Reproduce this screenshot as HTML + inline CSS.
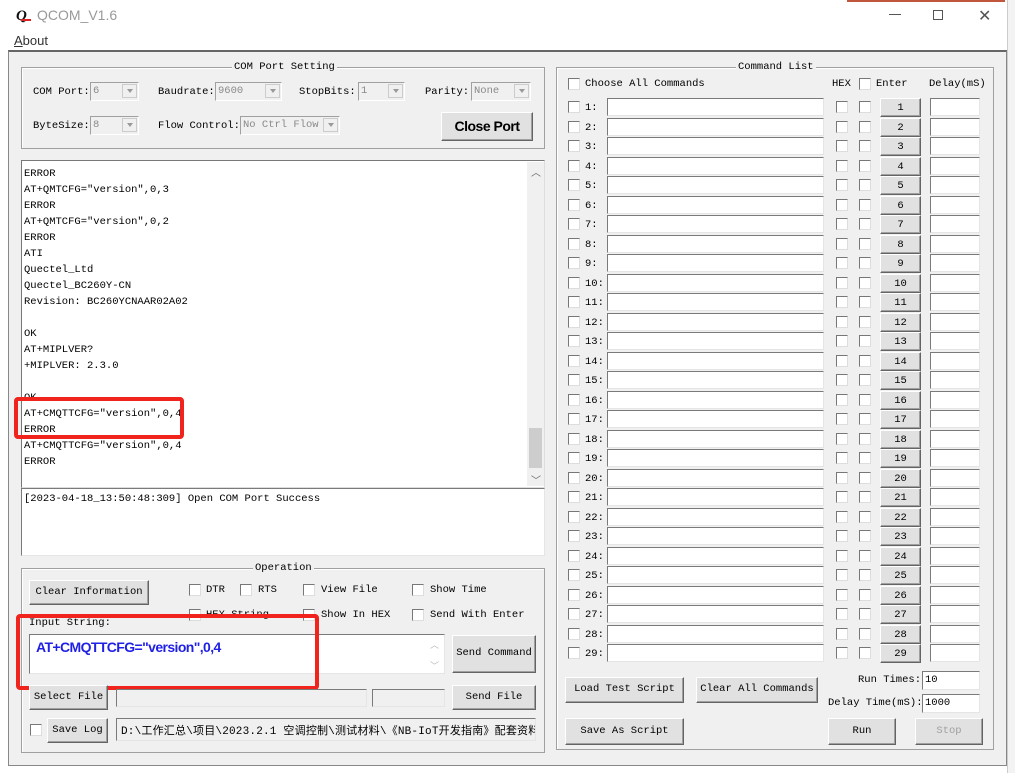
<!DOCTYPE html>
<html><head><meta charset="utf-8"><style>
*{box-sizing:border-box;margin:0;padding:0}
body{width:1015px;height:773px;background:#fff;position:relative;overflow:hidden;font-family:"Liberation Mono","Noto Sans CJK SC",monospace;font-size:10.5px;color:#000}
.a{position:absolute}
.grp{position:absolute;border:1px solid #a0a0a0;box-shadow:inset 1px 1px 0 #fff}
.gt{position:absolute;background:#f0f0f0;padding:0 2px;top:-7px;line-height:12px}
.cb{position:absolute;width:12px;height:12px;background:#fff;border:1px solid #777;border-right-color:#ddd;border-bottom-color:#ddd}
.btn{position:absolute;background:#e1e1e1;border:1px solid;border-color:#fff #646464 #646464 #fff;box-shadow:inset -1px -1px 0 #a0a0a0;text-align:center}
.ed{position:absolute;background:#fff;border:1px solid;border-color:#7a7a7a #e5e5e5 #e5e5e5 #7a7a7a}
.cmb{position:absolute;background:#f0f0f0;border:1px solid;border-color:#a0a0a0 #fff #fff #a0a0a0;color:#8a8a8a;padding-left:2px;line-height:16px}
.cmb i{position:absolute;right:1px;top:1px;width:15px;height:14px;border:1px solid #ccc;background:#f0f0f0}
.cmb i:after{content:"";position:absolute;left:4px;top:4px;border:3px solid transparent;border-top:4px solid #999}
.r{position:absolute;left:0;width:1015px;height:20px}
.r .cb{top:3px}
.r .l{position:absolute;left:585px;top:3px;line-height:14px}
.r .e1{left:607px;width:217px;height:18px;top:0}
.r .h{left:836px}.r .n{left:859px}.r .c0{left:568px}
.r .b{left:880px;width:41px;height:19px;top:0;line-height:18px}
.r .e2{left:930px;width:50px;height:18px;top:0}
.t{line-height:16px;white-space:pre}
</style></head><body>
<div class="a" style="left:0;top:0;width:1007px;height:52px;background:#fff"></div>
<div class="a" style="left:847px;top:0;width:158px;height:2px;background:#c0563c"></div>
<div class="a" style="left:1007px;top:0;width:8px;height:773px;background:#f3f3f3;border-left:1px solid #ccc"></div>
<div class="a" style="left:16px;top:8px;font:italic bold 15px 'Liberation Serif',serif;color:#111">Q</div>
<div class="a" style="left:21px;top:19px;width:10px;height:2px;background:#d22"></div>
<div class="a" style="left:37px;top:7px;font:14px 'Liberation Sans',sans-serif;color:#999">QCOM_V1.6</div>
<div class="a" style="left:889px;top:14px;width:12px;height:1px;background:#555"></div>
<div class="a" style="left:933px;top:10px;width:10px;height:10px;border:1px solid #555"></div>
<div class="a" style="left:978px;top:6px;font:16px 'Liberation Sans',sans-serif;color:#555">✕</div>
<div class="a" style="left:14px;top:33px;font:13px 'Liberation Sans',sans-serif;color:#333"><u>A</u>bout</div>
<div class="a" style="left:8px;top:50px;width:999px;height:716px;background:#f0f0f0;border:1px solid #888;border-top:2px solid #666"></div>

<div class="grp" style="left:21px;top:67px;width:524px;height:82px"><div class="gt" style="left:210px">COM Port Setting</div></div>
<div class="a" style="left:33px;top:86px">COM Port:</div>
<div class="cmb" style="left:90px;top:82px;width:49px;height:19px">6<i></i></div>
<div class="a" style="left:158px;top:86px">Baudrate:</div>
<div class="cmb" style="left:215px;top:82px;width:67px;height:19px">9600<i></i></div>
<div class="a" style="left:299px;top:86px">StopBits:</div>
<div class="cmb" style="left:358px;top:82px;width:47px;height:19px">1<i></i></div>
<div class="a" style="left:425px;top:86px">Parity:</div>
<div class="cmb" style="left:471px;top:82px;width:60px;height:19px">None<i></i></div>
<div class="a" style="left:33px;top:120px">ByteSize:</div>
<div class="cmb" style="left:90px;top:116px;width:49px;height:19px">8<i></i></div>
<div class="a" style="left:158px;top:120px">Flow Control:</div>
<div class="cmb" style="left:240px;top:116px;width:100px;height:19px">No Ctrl Flow<i></i></div>
<div class="btn" style="left:441px;top:112px;width:92px;height:29px;font:bold 14px 'Liberation Sans',sans-serif;line-height:26px;letter-spacing:-0.5px">Close Port</div>

<div class="ed" style="left:21px;top:160px;width:524px;height:328px;border-color:#777 #ddd #ddd #777"></div>
<div class="a" style="left:527px;top:162px;width:17px;height:324px;background:#f0f0f0"></div>
<div class="a" style="left:529px;top:428px;width:13px;height:40px;background:#cdcdcd"></div>
<div class="a" style="left:531px;top:164px;color:#666;font-size:10px">︿</div>
<div class="a" style="left:531px;top:472px;color:#666;font-size:10px">﹀</div>
<div class="a t" style="left:24px;top:166px">ERROR
AT+QMTCFG="version",0,3
ERROR
AT+QMTCFG="version",0,2
ERROR
ATI
Quectel_Ltd
Quectel_BC260Y-CN
Revision: BC260YCNAAR02A02

OK
AT+MIPLVER?
+MIPLVER: 2.3.0

OK
AT+CMQTTCFG="version",0,4
ERROR
AT+CMQTTCFG="version",0,4
ERROR</div>
<div class="a" style="left:14px;top:397px;width:170px;height:42px;border:4px solid #f0241c;border-radius:4px"></div>
<div class="ed" style="left:21px;top:488px;width:524px;height:68px"></div>
<div class="a" style="left:24px;top:493px">[2023-04-18_13:50:48:309] Open COM Port Success</div>

<div class="grp" style="left:21px;top:568px;width:524px;height:185px"><div class="gt" style="left:231px">Operation</div></div>
<div class="btn" style="left:29px;top:580px;width:120px;height:25px;line-height:22px">Clear Information</div>
<div class="cb" style="left:189px;top:584px"></div><div class="a" style="left:206px;top:584px">DTR</div>
<div class="cb" style="left:240px;top:584px"></div><div class="a" style="left:258px;top:584px">RTS</div>
<div class="cb" style="left:303px;top:584px"></div><div class="a" style="left:321px;top:584px">View File</div>
<div class="cb" style="left:412px;top:584px"></div><div class="a" style="left:430px;top:584px">Show Time</div>
<div class="cb" style="left:189px;top:609px"></div><div class="a" style="left:206px;top:609px">HEX String</div>
<div class="cb" style="left:303px;top:609px"></div><div class="a" style="left:321px;top:609px">Show In HEX</div>
<div class="cb" style="left:412px;top:609px"></div><div class="a" style="left:430px;top:609px">Send With Enter</div>
<div class="a" style="left:29px;top:617px;background:#f0f0f0;padding-right:4px">Input String:</div>
<div class="ed" style="left:29px;top:634px;width:416px;height:40px"></div>
<div class="a" style="left:36px;top:639px;font:bold 14px 'Liberation Sans',sans-serif;color:#1f1fe6;letter-spacing:-0.6px">AT+CMQTTCFG="version",0,4</div>
<div class="a" style="left:430px;top:638px;color:#bbb;font-size:9px">︿</div>
<div class="a" style="left:430px;top:659px;color:#bbb;font-size:9px">﹀</div>
<div class="btn" style="left:452px;top:635px;width:84px;height:38px;line-height:35px">Send Command</div>
<div class="a" style="left:16px;top:614px;width:303px;height:76px;border:4px solid #f0241c;border-radius:4px"></div>
<div class="btn" style="left:29px;top:685px;width:79px;height:25px;line-height:22px">Select File</div>
<div class="ed" style="left:116px;top:689px;width:251px;height:18px;background:#f0f0f0"></div>
<div class="ed" style="left:372px;top:689px;width:73px;height:18px;background:#f0f0f0"></div>
<div class="btn" style="left:452px;top:685px;width:84px;height:25px;line-height:22px">Send File</div>
<div class="cb" style="left:30px;top:724px"></div>
<div class="btn" style="left:47px;top:718px;width:61px;height:25px;line-height:22px">Save Log</div>
<div class="ed" style="left:116px;top:718px;width:420px;height:23px;background:#f0f0f0;overflow:hidden;white-space:nowrap;padding:3px 0 0 4px;font-family:'Liberation Mono','Noto Sans CJK SC',monospace;font-size:11px;letter-spacing:0.2px">D:\工作汇总\项目\2023.2.1 空调控制\测试材料\《NB-IoT开发指南》配套资料</div>

<div class="grp" style="left:556px;top:67px;width:438px;height:683px"><div class="gt" style="left:179px">Command List</div></div>
<div class="cb" style="left:568px;top:78px"></div><div class="a" style="left:585px;top:78px">Choose All Commands</div>
<div class="a" style="left:832px;top:78px">HEX</div>
<div class="cb" style="left:859px;top:78px"></div><div class="a" style="left:876px;top:78px">Enter</div>
<div class="a" style="left:929px;top:78px">Delay(mS)</div>

<div class="r" style="top:98px"><div class="cb c0"></div><div class="l">1:</div><div class="ed e1"></div><div class="cb h"></div><div class="cb n"></div><div class="btn b">1</div><div class="ed e2"></div></div>
<div class="r" style="top:117.5px"><div class="cb c0"></div><div class="l">2:</div><div class="ed e1"></div><div class="cb h"></div><div class="cb n"></div><div class="btn b">2</div><div class="ed e2"></div></div>
<div class="r" style="top:137px"><div class="cb c0"></div><div class="l">3:</div><div class="ed e1"></div><div class="cb h"></div><div class="cb n"></div><div class="btn b">3</div><div class="ed e2"></div></div>
<div class="r" style="top:156.5px"><div class="cb c0"></div><div class="l">4:</div><div class="ed e1"></div><div class="cb h"></div><div class="cb n"></div><div class="btn b">4</div><div class="ed e2"></div></div>
<div class="r" style="top:176px"><div class="cb c0"></div><div class="l">5:</div><div class="ed e1"></div><div class="cb h"></div><div class="cb n"></div><div class="btn b">5</div><div class="ed e2"></div></div>
<div class="r" style="top:195.5px"><div class="cb c0"></div><div class="l">6:</div><div class="ed e1"></div><div class="cb h"></div><div class="cb n"></div><div class="btn b">6</div><div class="ed e2"></div></div>
<div class="r" style="top:215px"><div class="cb c0"></div><div class="l">7:</div><div class="ed e1"></div><div class="cb h"></div><div class="cb n"></div><div class="btn b">7</div><div class="ed e2"></div></div>
<div class="r" style="top:234.5px"><div class="cb c0"></div><div class="l">8:</div><div class="ed e1"></div><div class="cb h"></div><div class="cb n"></div><div class="btn b">8</div><div class="ed e2"></div></div>
<div class="r" style="top:254px"><div class="cb c0"></div><div class="l">9:</div><div class="ed e1"></div><div class="cb h"></div><div class="cb n"></div><div class="btn b">9</div><div class="ed e2"></div></div>
<div class="r" style="top:273.5px"><div class="cb c0"></div><div class="l">10:</div><div class="ed e1"></div><div class="cb h"></div><div class="cb n"></div><div class="btn b">10</div><div class="ed e2"></div></div>
<div class="r" style="top:293px"><div class="cb c0"></div><div class="l">11:</div><div class="ed e1"></div><div class="cb h"></div><div class="cb n"></div><div class="btn b">11</div><div class="ed e2"></div></div>
<div class="r" style="top:312.5px"><div class="cb c0"></div><div class="l">12:</div><div class="ed e1"></div><div class="cb h"></div><div class="cb n"></div><div class="btn b">12</div><div class="ed e2"></div></div>
<div class="r" style="top:332px"><div class="cb c0"></div><div class="l">13:</div><div class="ed e1"></div><div class="cb h"></div><div class="cb n"></div><div class="btn b">13</div><div class="ed e2"></div></div>
<div class="r" style="top:351.5px"><div class="cb c0"></div><div class="l">14:</div><div class="ed e1"></div><div class="cb h"></div><div class="cb n"></div><div class="btn b">14</div><div class="ed e2"></div></div>
<div class="r" style="top:371px"><div class="cb c0"></div><div class="l">15:</div><div class="ed e1"></div><div class="cb h"></div><div class="cb n"></div><div class="btn b">15</div><div class="ed e2"></div></div>
<div class="r" style="top:390.5px"><div class="cb c0"></div><div class="l">16:</div><div class="ed e1"></div><div class="cb h"></div><div class="cb n"></div><div class="btn b">16</div><div class="ed e2"></div></div>
<div class="r" style="top:410px"><div class="cb c0"></div><div class="l">17:</div><div class="ed e1"></div><div class="cb h"></div><div class="cb n"></div><div class="btn b">17</div><div class="ed e2"></div></div>
<div class="r" style="top:429.5px"><div class="cb c0"></div><div class="l">18:</div><div class="ed e1"></div><div class="cb h"></div><div class="cb n"></div><div class="btn b">18</div><div class="ed e2"></div></div>
<div class="r" style="top:449px"><div class="cb c0"></div><div class="l">19:</div><div class="ed e1"></div><div class="cb h"></div><div class="cb n"></div><div class="btn b">19</div><div class="ed e2"></div></div>
<div class="r" style="top:468.5px"><div class="cb c0"></div><div class="l">20:</div><div class="ed e1"></div><div class="cb h"></div><div class="cb n"></div><div class="btn b">20</div><div class="ed e2"></div></div>
<div class="r" style="top:488px"><div class="cb c0"></div><div class="l">21:</div><div class="ed e1"></div><div class="cb h"></div><div class="cb n"></div><div class="btn b">21</div><div class="ed e2"></div></div>
<div class="r" style="top:507.5px"><div class="cb c0"></div><div class="l">22:</div><div class="ed e1"></div><div class="cb h"></div><div class="cb n"></div><div class="btn b">22</div><div class="ed e2"></div></div>
<div class="r" style="top:527px"><div class="cb c0"></div><div class="l">23:</div><div class="ed e1"></div><div class="cb h"></div><div class="cb n"></div><div class="btn b">23</div><div class="ed e2"></div></div>
<div class="r" style="top:546.5px"><div class="cb c0"></div><div class="l">24:</div><div class="ed e1"></div><div class="cb h"></div><div class="cb n"></div><div class="btn b">24</div><div class="ed e2"></div></div>
<div class="r" style="top:566px"><div class="cb c0"></div><div class="l">25:</div><div class="ed e1"></div><div class="cb h"></div><div class="cb n"></div><div class="btn b">25</div><div class="ed e2"></div></div>
<div class="r" style="top:585.5px"><div class="cb c0"></div><div class="l">26:</div><div class="ed e1"></div><div class="cb h"></div><div class="cb n"></div><div class="btn b">26</div><div class="ed e2"></div></div>
<div class="r" style="top:605px"><div class="cb c0"></div><div class="l">27:</div><div class="ed e1"></div><div class="cb h"></div><div class="cb n"></div><div class="btn b">27</div><div class="ed e2"></div></div>
<div class="r" style="top:624.5px"><div class="cb c0"></div><div class="l">28:</div><div class="ed e1"></div><div class="cb h"></div><div class="cb n"></div><div class="btn b">28</div><div class="ed e2"></div></div>
<div class="r" style="top:644px"><div class="cb c0"></div><div class="l">29:</div><div class="ed e1"></div><div class="cb h"></div><div class="cb n"></div><div class="btn b">29</div><div class="ed e2"></div></div>

<div class="btn" style="left:565px;top:677px;width:119px;height:26px;line-height:23px">Load Test Script</div>
<div class="btn" style="left:696px;top:677px;width:122px;height:26px;line-height:23px">Clear All Commands</div>
<div class="a" style="left:858px;top:674px">Run Times:</div>
<div class="ed" style="left:922px;top:671px;width:58px;height:19px;padding:2px 0 0 2px">10</div>
<div class="a" style="left:828px;top:697px">Delay Time(mS):</div>
<div class="ed" style="left:922px;top:694px;width:58px;height:19px;padding:2px 0 0 2px">1000</div>
<div class="btn" style="left:565px;top:718px;width:119px;height:27px;line-height:24px">Save As Script</div>
<div class="btn" style="left:828px;top:718px;width:68px;height:27px;line-height:24px">Run</div>
<div class="btn" style="left:915px;top:718px;width:68px;height:27px;line-height:24px;color:#a0a0a0">Stop</div>
</body></html>
